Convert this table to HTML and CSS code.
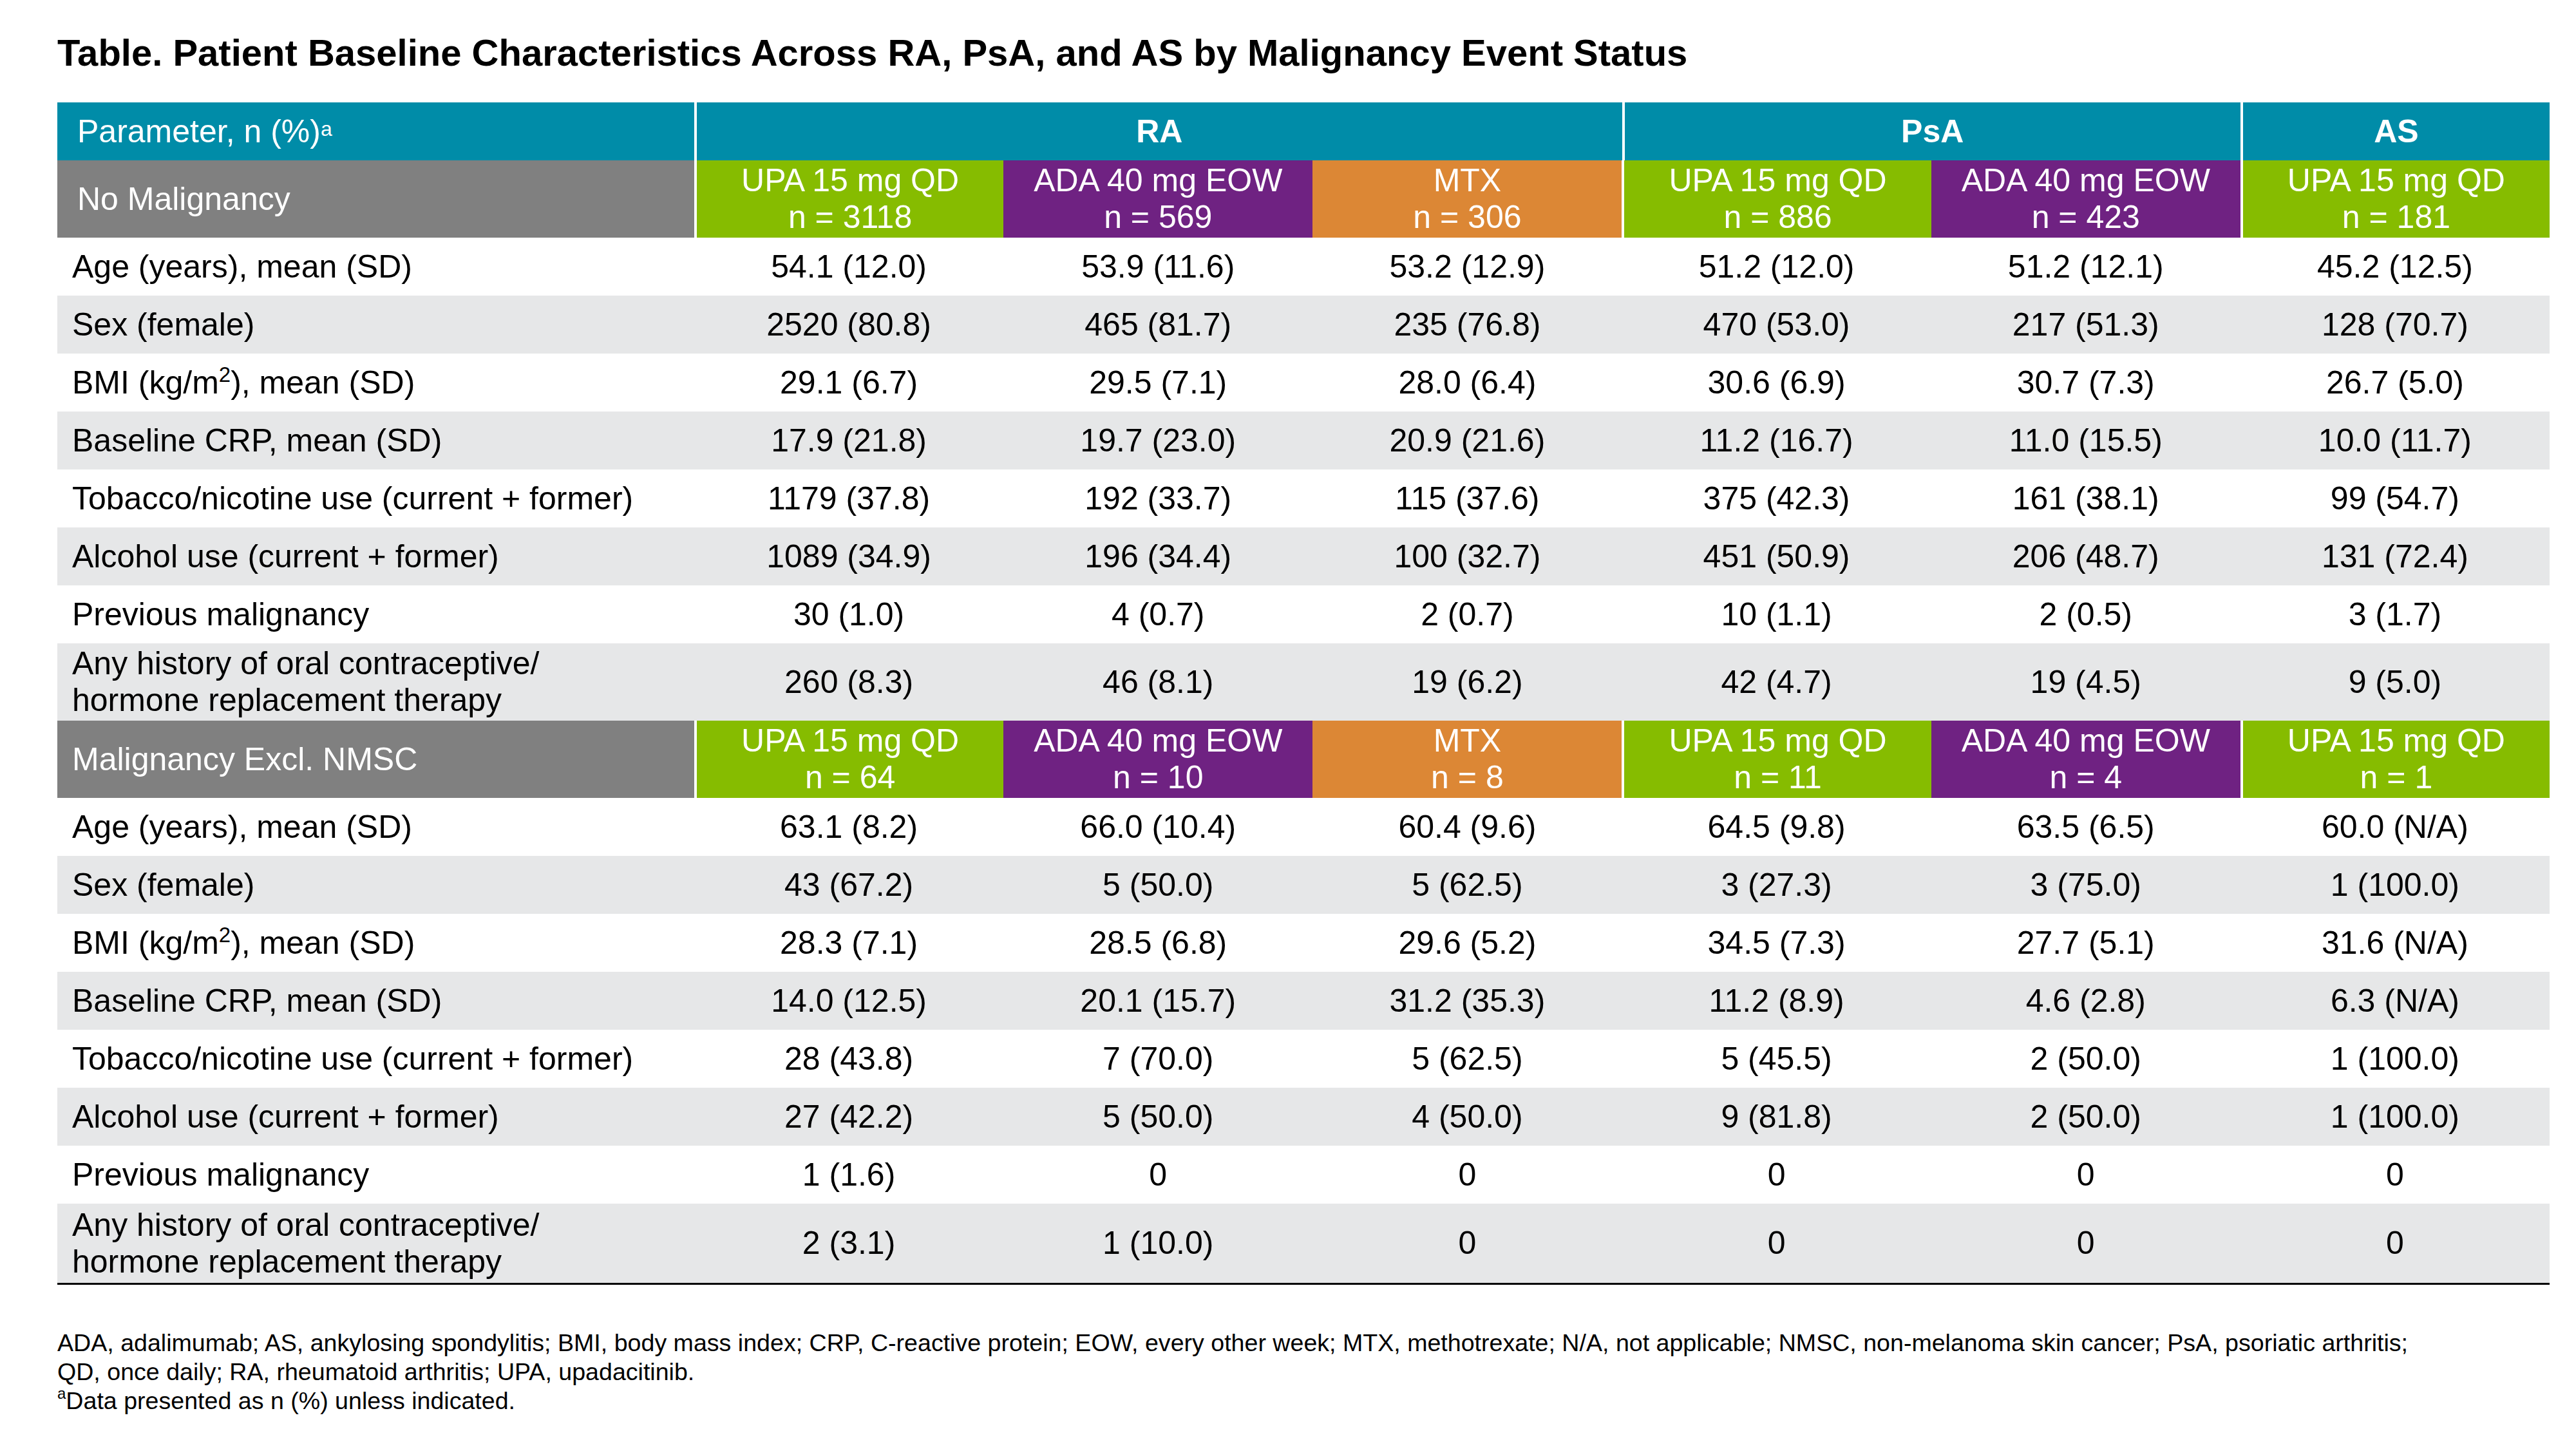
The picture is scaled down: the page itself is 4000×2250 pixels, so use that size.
FILE: index.html
```html
<!DOCTYPE html>
<html lang="en">
<head>
<meta charset="utf-8">
<title>Patient Baseline Characteristics</title>
<link rel="stylesheet" href="styles.css">
</head>
<body>
<div class="page">
  <h1 class="title">Table. Patient Baseline Characteristics Across RA, PsA, and AS by Malignancy Event Status</h1>

  <div class="table">
    <div class="row head1">
      <div class="cell param">Parameter, n (%)<sup>a</sup></div>
      <div class="cell grp sep span3">RA</div>
      <div class="cell grp sep span2">PsA</div>
      <div class="cell grp sep">AS</div>
    </div>

    <div class="row head2">
      <div class="cell section">No Malignancy</div>
      <div class="cell arm green sep">UPA 15 mg QD<br>n = 3118</div>
      <div class="cell arm purple">ADA 40 mg EOW<br>n = 569</div>
      <div class="cell arm orange">MTX<br>n = 306</div>
      <div class="cell arm green sep">UPA 15 mg QD<br>n = 886</div>
      <div class="cell arm purple">ADA 40 mg EOW<br>n = 423</div>
      <div class="cell arm green sep">UPA 15 mg QD<br>n = 181</div>
    </div>

    <div class="row data">
      <div class="cell label">Age (years), mean (SD)</div>
      <div class="cell num">54.1 (12.0)</div><div class="cell num">53.9 (11.6)</div><div class="cell num">53.2 (12.9)</div>
      <div class="cell num">51.2 (12.0)</div><div class="cell num">51.2 (12.1)</div><div class="cell num">45.2 (12.5)</div>
    </div>
    <div class="row data alt">
      <div class="cell label">Sex (female)</div>
      <div class="cell num">2520 (80.8)</div><div class="cell num">465 (81.7)</div><div class="cell num">235 (76.8)</div>
      <div class="cell num">470 (53.0)</div><div class="cell num">217 (51.3)</div><div class="cell num">128 (70.7)</div>
    </div>
    <div class="row data">
      <div class="cell label"><span>BMI (kg/m<sup class="sq">2</sup>), mean (SD)</span></div>
      <div class="cell num">29.1 (6.7)</div><div class="cell num">29.5 (7.1)</div><div class="cell num">28.0 (6.4)</div>
      <div class="cell num">30.6 (6.9)</div><div class="cell num">30.7 (7.3)</div><div class="cell num">26.7 (5.0)</div>
    </div>
    <div class="row data alt">
      <div class="cell label">Baseline CRP, mean (SD)</div>
      <div class="cell num">17.9 (21.8)</div><div class="cell num">19.7 (23.0)</div><div class="cell num">20.9 (21.6)</div>
      <div class="cell num">11.2 (16.7)</div><div class="cell num">11.0 (15.5)</div><div class="cell num">10.0 (11.7)</div>
    </div>
    <div class="row data">
      <div class="cell label">Tobacco/nicotine use (current + former)</div>
      <div class="cell num">1179 (37.8)</div><div class="cell num">192 (33.7)</div><div class="cell num">115 (37.6)</div>
      <div class="cell num">375 (42.3)</div><div class="cell num">161 (38.1)</div><div class="cell num">99 (54.7)</div>
    </div>
    <div class="row data alt">
      <div class="cell label">Alcohol use (current + former)</div>
      <div class="cell num">1089 (34.9)</div><div class="cell num">196 (34.4)</div><div class="cell num">100 (32.7)</div>
      <div class="cell num">451 (50.9)</div><div class="cell num">206 (48.7)</div><div class="cell num">131 (72.4)</div>
    </div>
    <div class="row data">
      <div class="cell label">Previous malignancy</div>
      <div class="cell num">30 (1.0)</div><div class="cell num">4 (0.7)</div><div class="cell num">2 (0.7)</div>
      <div class="cell num">10 (1.1)</div><div class="cell num">2 (0.5)</div><div class="cell num">3 (1.7)</div>
    </div>
    <div class="row data alt tall">
      <div class="cell label">Any history of oral contraceptive/<br>hormone replacement therapy</div>
      <div class="cell num">260 (8.3)</div><div class="cell num">46 (8.1)</div><div class="cell num">19 (6.2)</div>
      <div class="cell num">42 (4.7)</div><div class="cell num">19 (4.5)</div><div class="cell num">9 (5.0)</div>
    </div>

    <div class="row head2">
      <div class="cell section section2">Malignancy Excl. NMSC</div>
      <div class="cell arm green sep">UPA 15 mg QD<br>n = 64</div>
      <div class="cell arm purple">ADA 40 mg EOW<br>n = 10</div>
      <div class="cell arm orange">MTX<br>n = 8</div>
      <div class="cell arm green sep">UPA 15 mg QD<br>n = 11</div>
      <div class="cell arm purple">ADA 40 mg EOW<br>n = 4</div>
      <div class="cell arm green sep">UPA 15 mg QD<br>n = 1</div>
    </div>

    <div class="row data">
      <div class="cell label">Age (years), mean (SD)</div>
      <div class="cell num">63.1 (8.2)</div><div class="cell num">66.0 (10.4)</div><div class="cell num">60.4 (9.6)</div>
      <div class="cell num">64.5 (9.8)</div><div class="cell num">63.5 (6.5)</div><div class="cell num">60.0 (N/A)</div>
    </div>
    <div class="row data alt">
      <div class="cell label">Sex (female)</div>
      <div class="cell num">43 (67.2)</div><div class="cell num">5 (50.0)</div><div class="cell num">5 (62.5)</div>
      <div class="cell num">3 (27.3)</div><div class="cell num">3 (75.0)</div><div class="cell num">1 (100.0)</div>
    </div>
    <div class="row data">
      <div class="cell label"><span>BMI (kg/m<sup class="sq">2</sup>), mean (SD)</span></div>
      <div class="cell num">28.3 (7.1)</div><div class="cell num">28.5 (6.8)</div><div class="cell num">29.6 (5.2)</div>
      <div class="cell num">34.5 (7.3)</div><div class="cell num">27.7 (5.1)</div><div class="cell num">31.6 (N/A)</div>
    </div>
    <div class="row data alt">
      <div class="cell label">Baseline CRP, mean (SD)</div>
      <div class="cell num">14.0 (12.5)</div><div class="cell num">20.1 (15.7)</div><div class="cell num">31.2 (35.3)</div>
      <div class="cell num">11.2 (8.9)</div><div class="cell num">4.6 (2.8)</div><div class="cell num">6.3 (N/A)</div>
    </div>
    <div class="row data">
      <div class="cell label">Tobacco/nicotine use (current + former)</div>
      <div class="cell num">28 (43.8)</div><div class="cell num">7 (70.0)</div><div class="cell num">5 (62.5)</div>
      <div class="cell num">5 (45.5)</div><div class="cell num">2 (50.0)</div><div class="cell num">1 (100.0)</div>
    </div>
    <div class="row data alt">
      <div class="cell label">Alcohol use (current + former)</div>
      <div class="cell num">27 (42.2)</div><div class="cell num">5 (50.0)</div><div class="cell num">4 (50.0)</div>
      <div class="cell num">9 (81.8)</div><div class="cell num">2 (50.0)</div><div class="cell num">1 (100.0)</div>
    </div>
    <div class="row data">
      <div class="cell label">Previous malignancy</div>
      <div class="cell num">1 (1.6)</div><div class="cell num">0</div><div class="cell num">0</div>
      <div class="cell num">0</div><div class="cell num">0</div><div class="cell num">0</div>
    </div>
    <div class="row data alt tall last">
      <div class="cell label">Any history of oral contraceptive/<br>hormone replacement therapy</div>
      <div class="cell num">2 (3.1)</div><div class="cell num">1 (10.0)</div><div class="cell num">0</div>
      <div class="cell num">0</div><div class="cell num">0</div><div class="cell num">0</div>
    </div>
  </div>

  <div class="notes">
    <p>ADA, adalimumab; AS, ankylosing spondylitis; BMI, body mass index; CRP, C-reactive protein; EOW, every other week; MTX, methotrexate; N/A, not applicable; NMSC, non-melanoma skin cancer; PsA, psoriatic arthritis;</p>
    <p>QD, once daily; RA, rheumatoid arthritis; UPA, upadacitinib.</p>
    <p><sup class="fn">a</sup>Data presented as n (%) unless indicated.</p>
  </div>
</div>
</body>
</html>
```

FILE: styles.css
```css
html, body {
  margin: 0;
  padding: 0;
  background: #ffffff;
}

body {
  font-family: "Liberation Sans", Arial, sans-serif;
  color: #000000;
}

.page {
  padding: 49px 0 0 89px;
  width: 3870px;
}

.title {
  margin: 0;
  font-size: 58px;
  line-height: 66px;
  font-weight: bold;
  white-space: nowrap;
}

.table {
  margin-top: 44px;
  width: 3870px;
}

.row {
  display: grid;
  grid-template-columns: 989px repeat(6, 1fr);
}

.cell {
  display: flex;
  align-items: center;
  font-size: 50px;
  line-height: 57px;
  box-sizing: border-box;
}

.head1 {
  height: 90px;
  background: #008ca8;
  color: #ffffff;
}

.param {
  padding-left: 31px;
}

.param sup {
  font-size: 32px;
  line-height: 0;
  position: relative;
  top: -4px;
}

.grp {
  justify-content: center;
  font-weight: bold;
}

.span3 { grid-column: span 3; }
.span2 { grid-column: span 2; }

.sep {
  border-left: 4px solid #ffffff;
}

.head2 {
  height: 120px;
  color: #ffffff;
}

.section {
  background: #808080;
  padding-left: 31px;
}

.section2 {
  padding-left: 23px;
}

.arm {
  justify-content: center;
  text-align: center;
}

.green { background: #86bc00; }
.purple { background: #6f2282; }
.orange { background: #dc8735; }

.data {
  height: 90px;
  background: #ffffff;
}

.data.alt {
  background: #e6e7e8;
}

.data.tall {
  height: 120px;
}

.data.last {
  border-bottom: 3px solid #000000;
  height: 123px;
}

.label {
  padding-left: 23px;
}

.num {
  justify-content: center;
}

.sq {
  font-size: 33px;
  line-height: 0;
  vertical-align: baseline;
  position: relative;
  top: -18px;
}

.notes {
  margin-top: 68px;
  font-size: 37.6px;
  line-height: 45px;
}

.notes p {
  margin: 0;
  white-space: nowrap;
}

.fn {
  font-size: 24px;
  line-height: 0;
  position: relative;
  top: -2px;
}
```
